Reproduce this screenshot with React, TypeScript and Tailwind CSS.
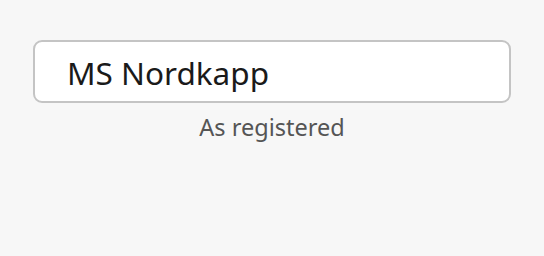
export default function App() {
  return (
    <div className="w-[544px] h-[256px] bg-[#f7f7f7] pt-[40px] px-[33px] font-['Noto_Sans',sans-serif]">
      <div className="h-[63px] w-[478px] rounded-[9px] border-2 border-[#c4c4c4] bg-white flex items-center pl-[32px] pt-[3px]">
        <span className="text-[31.5px] text-[#1a1a1a] leading-none">MS Nordkapp</span>
      </div>
      <p className="mt-[13px] text-center text-[23.5px] text-[#555555] leading-none">As registered</p>
    </div>
  );
}
